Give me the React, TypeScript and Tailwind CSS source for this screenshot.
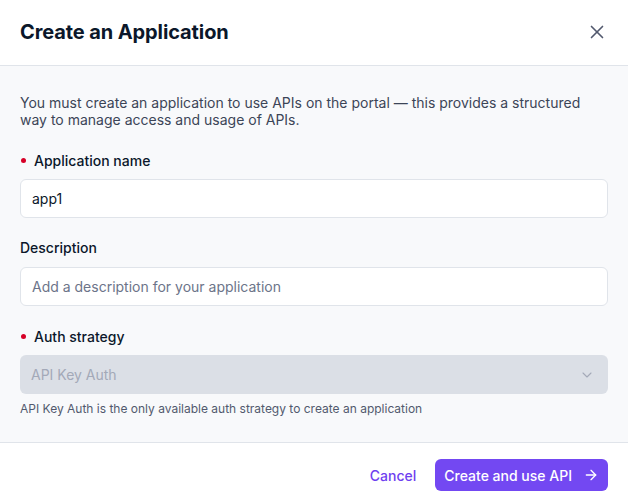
import { X, ChevronDown, ArrowRight } from 'lucide-react'

function Label({ text, required }: { text: string; required?: boolean }) {
  return (
    <div className="flex items-center gap-[8px] h-[20px] text-[14px] font-medium text-[#0b172a]">
      {required && <span className="w-[5px] h-[5px] rounded-full bg-[#d60027] ml-[1px]" />}
      {text}
    </div>
  )
}

export default function App() {
  return (
    <div className="w-[628px] h-[503px] bg-white flex flex-col font-['Inter',sans-serif]">
      <div className="h-[66px] shrink-0 flex items-center justify-between px-[20px] pb-[2px] border-b border-[#e0e4ea]">
        <h1 className="text-[20px] font-bold text-[#0b172a] tracking-[-0.1px]">Create an Application</h1>
        <X size={22} strokeWidth={1.8} className="text-[#52596e]" />
      </div>
      <div className="h-[377px] shrink-0 bg-[#f8f9fb] border-b border-[#e0e4ea] px-[20px] pt-[28px]">
        <p className="text-[14px] leading-[17px] text-[#3c4557]">
          You must create an application to use APIs on the portal — this provides a structured way to manage
          access and usage of APIs.
        </p>
        <div className="mt-[22px]">
          <Label text="Application name" required />
        </div>
        <div className="mt-[9px] h-[39px] bg-white border border-[#e0e4ea] rounded-[6px] flex items-center px-[11px] text-[14px] text-[#0b172a]">
          app1
        </div>
        <div className="mt-[19px]">
          <Label text="Description" />
        </div>
        <div className="mt-[10px] h-[39px] bg-white border border-[#e0e4ea] rounded-[6px] flex items-center px-[11px] text-[14px] text-[#6c7489]">
          Add a description for your application
        </div>
        <div className="mt-[20px]">
          <Label text="Auth strategy" required />
        </div>
        <div className="mt-[9px] h-[39px] bg-[#dbdfe6] rounded-[6px] flex items-center justify-between px-[11px] text-[14px] text-[#a3a9b8]">
          API Key Auth
          <ChevronDown size={16} strokeWidth={1.6} className="text-[#a3a9b8] mr-[2px]" />
        </div>
        <p className="mt-[7px] text-[12px] leading-[16px] text-[#52596e]">
          API Key Auth is the only available auth strategy to create an application
        </p>
      </div>
      <div className="flex-1 flex items-center justify-end gap-[19px] px-[20px] pt-[4px]">
        <button className="text-[14px] font-medium text-[#6f3ff0]">Cancel</button>
        <button className="h-[32px] pl-[9px] pr-[9px] rounded-[6px] bg-[#7348f2] text-white text-[14px] font-medium flex items-center gap-[11px]">
          Create and use API
          <ArrowRight size={16} strokeWidth={2} />
        </button>
      </div>
    </div>
  )
}
